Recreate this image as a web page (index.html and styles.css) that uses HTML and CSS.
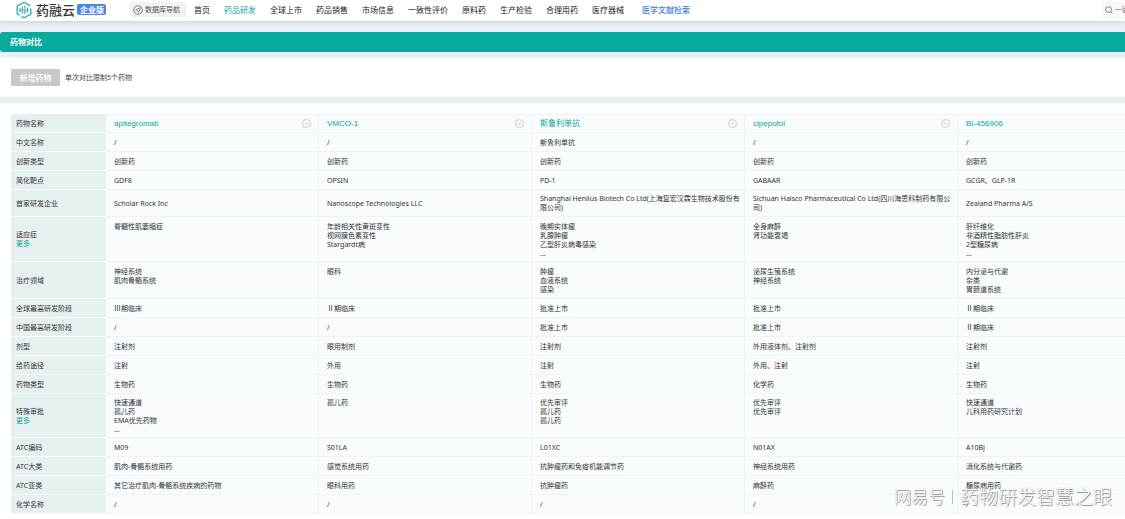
FILE: index.html
```html
<!DOCTYPE html>
<html lang="zh-CN">
<head>
<meta charset="utf-8">
<title>药物对比</title>
<link rel="stylesheet" href="styles.css">
</head>
<body>
<header class="topbar">
  <a class="brand" href="#">
    <svg class="brand-mark" viewBox="0 0 16 18" aria-hidden="true">
      <path d="M3.6 14.2 1.2 12.8V5L8 1.2 14.2 4.6M14.8 7.5V13L8 16.8 5.6 15.4" fill="none" stroke="#35b3a4" stroke-width="1.4"/>
      <path d="M4 7v4.5M6.3 5.4v2.8M6.3 9.8v3M8.9 4.8v3M8.9 9.6v3.6M11.6 6.4v5M3.4 9h9" fill="none" stroke="#3f9fc4" stroke-width="1.1"/>
    </svg>
    <span class="brand-name">药融云</span>
    <span class="brand-badge">企业版</span>
  </a>
  <button class="db-button" type="button">
    <svg class="db-icon" viewBox="0 0 10 10" aria-hidden="true">
      <circle cx="5" cy="5" r="4.3" fill="none" stroke="#777" stroke-width=".9"/>
      <path d="M7.4 2.8 5.6 7.4 4.7 5.4 2.6 4.7Z" fill="none" stroke="#777" stroke-width=".8"/>
    </svg>
    数据库导航
  </button>
  <nav class="nav">
    <a href="#">首页</a>
    <a class="active" href="#">药品研发</a>
    <a href="#">全球上市</a>
    <a href="#">药品销售</a>
    <a href="#">市场信息</a>
    <a href="#">一致性评价</a>
    <a href="#">原料药</a>
    <a href="#">生产检验</a>
    <a href="#">合理用药</a>
    <a href="#">医疗器械</a>
    <a class="search-link" href="#">医学文献检索</a>
  </nav>
  <label class="search">
    <svg class="search-icon" viewBox="0 0 8 8" aria-hidden="true">
      <circle cx="3.6" cy="3.6" r="2.9" fill="none" stroke="#777" stroke-width=".9"/>
      <path d="M5.7 5.7 7.4 7.4" stroke="#777" stroke-width=".9"/>
    </svg>
    <input type="search" placeholder="一键检索" aria-label="一键检索">
  </label>
</header>

<h1 class="page-title">药物对比</h1>

<section class="toolbar">
  <button class="add-button" type="button" disabled>新增药物</button>
  <span class="hint">单次对比限制5个药物</span>
</section>

<main class="panel">
  <table class="compare">
    <colgroup><col class="col-label"><col><col><col><col><col></colgroup>
    <tbody>
    <tr class="names"><th scope="row">药物名称</th>
      <td><div class="drug"><a href="#">apitegromab</a><button class="remove" type="button" aria-label="移除"></button></div></td>
      <td><div class="drug"><a href="#">VMCO-1</a><button class="remove" type="button" aria-label="移除"></button></div></td>
      <td><div class="drug"><a href="#">斯鲁利单抗</a><button class="remove" type="button" aria-label="移除"></button></div></td>
      <td><div class="drug"><a href="#">cipepofol</a><button class="remove" type="button" aria-label="移除"></button></div></td>
      <td><div class="drug"><a href="#">BI-456906</a><button class="remove" type="button" aria-label="移除"></button></div></td></tr>
    <tr><th scope="row">中文名称</th><td>/</td><td>/</td><td>斯鲁利单抗</td><td>/</td><td>/</td></tr>
    <tr><th scope="row">创新类型</th><td>创新药</td><td>创新药</td><td>创新药</td><td>创新药</td><td>创新药</td></tr>
    <tr><th scope="row">简化靶点</th><td>GDF8</td><td>OPSIN</td><td>PD-1</td><td>GABAAR</td><td>GCGR、GLP-1R</td></tr>
    <tr class="company"><th scope="row">首家研发企业</th><td>Scholar Rock Inc</td><td>Nanoscope Technologies LLC</td><td>Shanghai Henlius Biotech Co Ltd(上海复宏汉霖生物技术股份有限公司)</td><td>Sichuan Haisco Pharmaceutical Co Ltd(四川海思科制药有限公司)</td><td>Zealand Pharma A/S</td></tr>
    <tr class="multi"><th scope="row">适应症<br><a href="#">更多</a></th>
      <td>脊髓性肌萎缩症</td>
      <td>年龄相关性黄斑变性<br>视网膜色素变性<br>Stargardt病</td>
      <td>晚期实体瘤<br>乳腺肿瘤<br>乙型肝炎病毒感染<br>...</td>
      <td>全身麻醉<br>肾功能衰竭</td>
      <td>肝纤维化<br>非酒精性脂肪性肝炎<br>2型糖尿病<br>...</td></tr>
    <tr class="area"><th scope="row">治疗领域</th>
      <td>神经系统<br>肌肉骨骼系统</td>
      <td>眼科</td>
      <td>肿瘤<br>血液系统<br>感染</td>
      <td>泌尿生殖系统<br>神经系统</td>
      <td>内分泌与代谢<br>杂类<br>胃肠道系统</td></tr>
    <tr><th scope="row">全球最高研发阶段</th><td>Ⅲ期临床</td><td>Ⅱ期临床</td><td>批准上市</td><td>批准上市</td><td>Ⅱ期临床</td></tr>
    <tr><th scope="row">中国最高研发阶段</th><td>/</td><td>/</td><td>批准上市</td><td>批准上市</td><td>Ⅱ期临床</td></tr>
    <tr><th scope="row">剂型</th><td>注射剂</td><td>眼用制剂</td><td>注射剂</td><td>外用液体剂、注射剂</td><td>注射剂</td></tr>
    <tr><th scope="row">给药途径</th><td>注射</td><td>外用</td><td>注射</td><td>外用、注射</td><td>注射</td></tr>
    <tr><th scope="row">药物类型</th><td>生物药</td><td>生物药</td><td>生物药</td><td>化学药</td><td>生物药</td></tr>
    <tr class="multi approvals"><th scope="row">特殊审批<br><a href="#">更多</a></th>
      <td>快速通道<br>孤儿药<br>EMA优先药物<br>...</td>
      <td>孤儿药</td>
      <td>优先审评<br>孤儿药<br>孤儿药</td>
      <td>优先审评<br>优先审评</td>
      <td>快速通道<br>儿科用药研究计划</td></tr>
    <tr><th scope="row">ATC编码</th><td>M09</td><td>S01LA</td><td>L01XC</td><td>N01AX</td><td>A10BJ</td></tr>
    <tr><th scope="row">ATC大类</th><td>肌肉-骨骼系统用药</td><td>感觉系统用药</td><td>抗肿瘤药和免疫机能调节药</td><td>神经系统用药</td><td>消化系统与代谢药</td></tr>
    <tr><th scope="row">ATC亚类</th><td>其它治疗肌肉-骨骼系统疾病的药物</td><td>眼科用药</td><td>抗肿瘤药</td><td>麻醉药</td><td>糖尿病用药</td></tr>
    <tr><th scope="row">化学名称</th><td>/</td><td>/</td><td>/</td><td>/</td><td>/</td></tr>
    </tbody>
  </table>
</main>

<div class="watermark"><span class="wm-site">网易号</span><span class="wm-bar"></span><span>药物研发智慧之眼</span></div>
</body>
</html>
```
FILE: styles.css
```css
* { box-sizing: border-box; }

body {
  margin: 0;
  min-height: 100vh;
  overflow: hidden;
  display: flex;
  flex-direction: column;
  background: #e9eff4;
  color: #333;
  font: 7px/9px "Noto Sans", "Noto Sans CJK SC", sans-serif;
}

a { color: inherit; text-decoration: none; }
button, input { font: inherit; color: inherit; border: 0; padding: 0; margin: 0; }

.topbar {
  display: flex;
  align-items: center;
  height: 21px;
  padding: 0 0 2px 16px;
  background: #fff;
  box-shadow: 0 1px 4px rgba(60, 80, 100, .2);
  white-space: nowrap;
  overflow: clip;
  overflow-clip-margin: 5px;
}
.brand { display: flex; align-items: center; width: 114px; flex: none; }
.brand-mark { width: 16px; height: 18px; margin-right: 4px; }
.brand-name { font-size: 13px; line-height: 18px; font-weight: 500; color: #333; }
.brand-badge {
  margin-left: 2px;
  padding: 0 2px 0 3px;
  border-radius: 2px;
  background: #4a86e4;
  color: #fff;
  font-size: 8px;
  line-height: 11px;
  font-weight: 700;
}
.db-button {
  display: flex;
  align-items: center;
  gap: 2px;
  flex: none;
  width: 56px;
  height: 15px;
  padding-left: 3px;
  border-radius: 2px;
  background: #f2f2f2;
  color: #555;
}
.db-icon { width: 10px; height: 10px; }
.nav {
  display: flex;
  gap: 14px;
  margin-left: 8px;
  font-size: 8px;
  line-height: 12px;
  color: #222;
}
.nav .active { color: #0aa89b; }
.nav .search-link { margin-left: 4px; color: #3f83d8; font-weight: 500; }
.search {
  display: flex;
  align-items: center;
  gap: 2px;
  flex: none;
  width: 23px;
  height: 16px;
  margin-left: auto;
  padding-left: 3px;
  background: #f7f8f9;
  overflow: hidden;
}
.search-icon { width: 8px; height: 8px; flex: none; }
.search input { width: 60px; flex: none; background: none; }

.page-title {
  margin: 11px 0 6px;
  padding: 0 10px;
  border-radius: 3px 0 0 3px;
  background: #08ab9d;
  color: #fff;
  font-size: 8px;
  line-height: 20px;
  font-weight: 700;
}

.toolbar {
  display: flex;
  align-items: center;
  gap: 5px;
  height: 39px;
  padding: 0 11px;
  background: #fff;
}
.add-button {
  width: 49px;
  height: 17px;
  border-radius: 1px;
  background: #c8c8c8;
  color: #fff;
  font-size: 8px;
  font-weight: 500;
}
.hint { color: #444; }

.panel {
  flex: 1;
  margin-top: 6px;
  padding: 11px 0 3px 11px;
  background: #fff;
  overflow: hidden;
}
.compare {
  width: 1160px;
  table-layout: fixed;
  border-collapse: separate;
  border-spacing: 0;
}
.col-label { width: 95px; }
.compare tr { height: 19px; }
.compare th, .compare td {
  padding: 0 8px;
  text-align: left;
  vertical-align: middle;
  font-weight: 400;
}
.compare th {
  padding: 0 5px;
  background: #e7f0f1;
  border-bottom: 1px solid #f7fbfb;
}
.compare td {
  padding-right: 4px;
  background: #f8fcfd;
  border-right: 1px solid #eef3f4;
  border-bottom: 1px solid #eef3f4;
}
.compare .names td { padding-right: 7px; border-top: 1px solid #eef3f4; }
.compare th a, .drug a { color: #0aa89b; }
.compare .company { height: 27px; }
.compare .multi { height: 45px; }
.compare .approvals { height: 44px; }
.compare .area { height: 37px; }
.compare .multi td, .compare .area td { padding-top: 5px; vertical-align: top; }
.compare .approvals td { padding-top: 4px; }

.drug {
  display: flex;
  align-items: center;
  justify-content: space-between;
  font-family: "Liberation Sans", "Noto Sans CJK SC", sans-serif;
  font-size: 8px;
}
.remove {
  display: grid;
  place-items: center;
  width: 9px;
  height: 9px;
  border: 1px solid #ccc;
  border-radius: 50%;
  background: none;
}
.remove::before { content: ""; width: 3px; height: 1px; background: #ccc; }

.watermark {
  position: absolute;
  right: 13px;
  bottom: 9px;
  display: flex;
  align-items: center;
  gap: 7px;
  color: #f8fbfc;
  font-size: 19px;
  line-height: 26px;
  font-weight: 300;
  text-shadow: 1px 1px 0 #999, 0 0 1px #bbb;
}
.wm-site { font-size: 17px; }
.wm-bar { width: 1px; height: 14px; background: #bbb; }
```
